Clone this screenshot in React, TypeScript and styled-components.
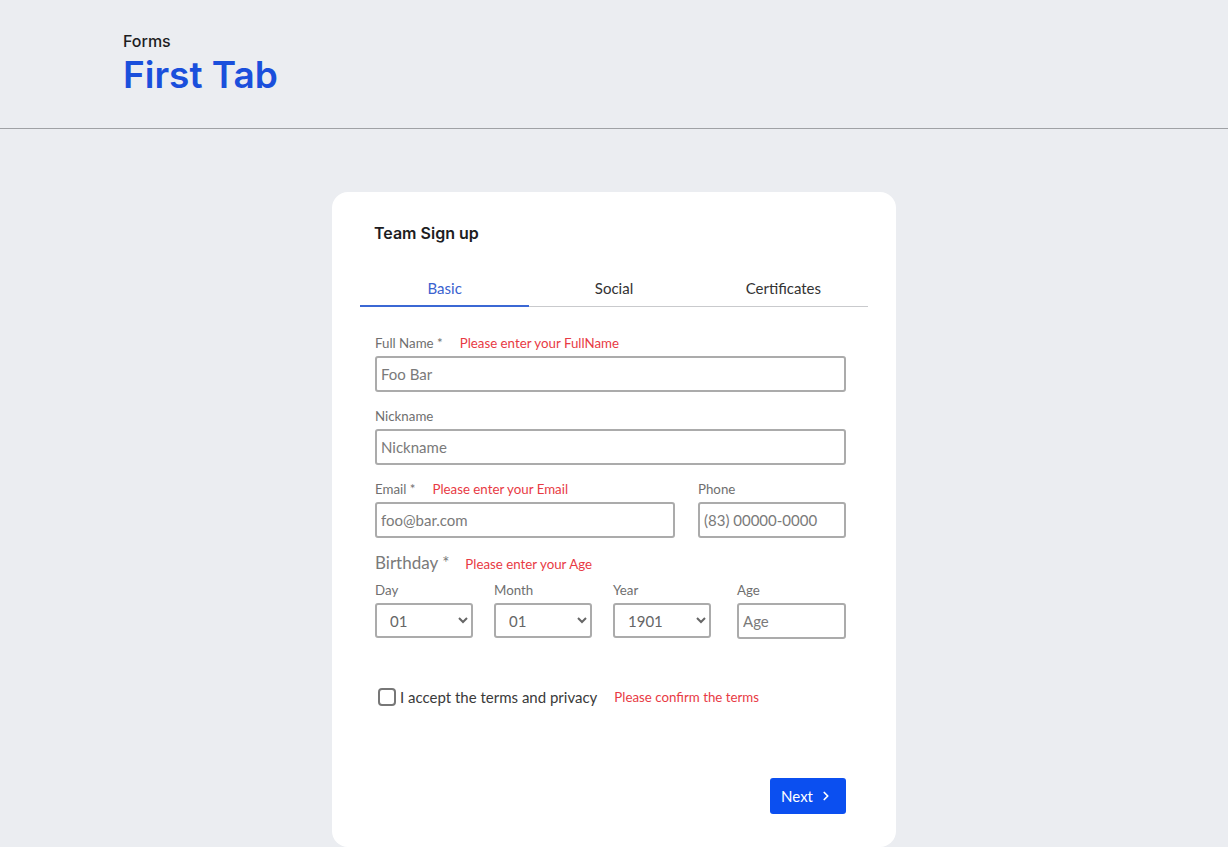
import styled, { createGlobalStyle } from "styled-components";

const GlobalStyle = createGlobalStyle`
  body {
    margin: 0;
    background: #ebedf1;
    font-family: "Lato", "Noto Sans", sans-serif;
  }
`;

const App = () => {
  return (
    <>
      <GlobalStyle />
      <Header>
        <Breadcrumb>Forms</Breadcrumb>
        <PageTitle>First Tab</PageTitle>
      </Header>

      <Main>
        <Card>
          <CardTitle>Team Sign up</CardTitle>

          <Tabs>
            <Tab $active>Basic</Tab>
            <Tab>Social</Tab>
            <Tab>Certificates</Tab>
          </Tabs>

          <Form>
            <Field>
              <LabelRow>
                <Label>Full Name *</Label>
                <Erro>Please enter your FullName</Erro>
              </LabelRow>
              <Input type="text" placeholder="Foo Bar" />
            </Field>

            <Field>
              <LabelRow>
                <Label>Nickname</Label>
              </LabelRow>
              <Input type="text" placeholder="Nickname" />
            </Field>

            <Linha>
              <Field $width="300px">
                <LabelRow>
                  <Label>Email *</Label>
                  <Erro>Please enter your Email</Erro>
                </LabelRow>
                <Input type="email" placeholder="foo@bar.com" />
              </Field>
              <Field $width="148px">
                <LabelRow>
                  <Label>Phone</Label>
                </LabelRow>
                <Input type="tel" placeholder="(83) 00000-0000" />
              </Field>
            </Linha>

            <BirthdayRow>
              <BirthdayLabel>Birthday *</BirthdayLabel>
              <Erro>Please enter your Age</Erro>
            </BirthdayRow>

            <DateGrid>
              <SmallField>
                <Label>Day</Label>
                <Select defaultValue="01">
                  <option>01</option>
                </Select>
              </SmallField>
              <SmallField>
                <Label>Month</Label>
                <Select defaultValue="01">
                  <option>01</option>
                </Select>
              </SmallField>
              <SmallField>
                <Label>Year</Label>
                <Select defaultValue="1901">
                  <option>1901</option>
                </Select>
              </SmallField>
              <SmallField $offset>
                <Label>Age</Label>
                <Input type="number" placeholder="Age" />
              </SmallField>
            </DateGrid>

            <TermsRow>
              <CheckLabel>
                <Checkbox type="checkbox" />
                I accept the terms and privacy
              </CheckLabel>
              <Erro>Please confirm the terms</Erro>
            </TermsRow>

            <Actions>
              <NextButton type="button">
                Next
                <svg width="14" height="14" viewBox="0 0 24 24" fill="none" stroke="currentColor" strokeWidth="3" strokeLinecap="round" strokeLinejoin="round">
                  <path d="M9 6l6 6-6 6" />
                </svg>
              </NextButton>
            </Actions>
          </Form>
        </Card>
      </Main>
    </>
  );
};

export default App;

const Header = styled.header`
  height: 129px;
  box-sizing: border-box;
  padding: 31px 0 0 123px;
  border-bottom: 1px solid #9fa1a5;
  font-family: "Inter", "Noto Sans", sans-serif;
`;

const Breadcrumb = styled.div`
  font-size: 16px;
  font-weight: 500;
  color: #1d1d1f;
  line-height: 20px;
`;

const PageTitle = styled.h1`
  margin: 2px 0 0;
  font-size: 37px;
  font-weight: 600;
  line-height: 44px;
  color: #1a4fdc;
`;

const Main = styled.main`
  display: flex;
  justify-content: center;
  padding-top: 63px;
`;

const Card = styled.section`
  width: 564px;
  height: 655px;
  box-sizing: border-box;
  background: #ffffff;
  border-radius: 16px;
  padding: 31px 28px 32px;
`;

const CardTitle = styled.h2`
  margin: 0;
  padding: 0 14px;
  font-family: "Inter", "Noto Sans", sans-serif;
  font-size: 16px;
  font-weight: 600;
  line-height: 20px;
  color: #1d1d1f;
`;

const Tabs = styled.div`
  display: grid;
  grid-template-columns: repeat(3, 1fr);
  margin-top: 28px;
  border-bottom: 1px solid #c9cacd;
`;

const Tab = styled.div<{ $active?: boolean }>`
  text-align: center;
  font-size: 15px;
  line-height: 20px;
  padding: 7px 0 7px;
  color: ${(p) => (p.$active ? "#3a62cf" : "#333")};
  border-bottom: 2px solid ${(p) => (p.$active ? "#3b68d4" : "transparent")};
  margin-bottom: -1px;
`;

const Form = styled.form`
  display: flex;
  flex-direction: column;
  padding: 28px 22px 0 15px;
`;

const Field = styled.div<{ $width?: string }>`
  display: flex;
  flex-direction: column;
  width: ${(p) => p.$width || "auto"};
  margin-bottom: 16px;
`;

const LabelRow = styled.div`
  display: flex;
  align-items: center;
  gap: 17px;
  height: 16px;
  margin-bottom: 5px;
`;

const Label = styled.label`
  font-size: 13.3px;
  line-height: 16px;
  color: #6f6f6f;
`;

const Erro = styled.span`
  font-size: 13.3px;
  line-height: 16px;
  color: #e83a44;
`;

const Input = styled.input`
  height: 36px;
  box-sizing: border-box;
  width: 100%;
  padding: 0 4px;
  border: 2px solid #ababab;
  border-radius: 3px;
  font-family: inherit;
  font-size: 15px;
  color: #444;
  outline: none;

  &::placeholder {
    color: #7a7a7a;
  }

  &::-webkit-inner-spin-button {
    display: none;
  }
`;

const Linha = styled.div`
  display: flex;
  justify-content: space-between;
`;

const BirthdayRow = styled.div`
  display: flex;
  align-items: baseline;
  gap: 16px;
  margin-top: -2px;
`;

const BirthdayLabel = styled.span`
  font-size: 17px;
  line-height: 22px;
  color: #7a7a7a;
`;

const DateGrid = styled.div`
  display: grid;
  grid-template-columns: 98px 98px 98px 1fr;
  column-gap: 21px;
  margin-top: 8px;
`;

const SmallField = styled.div<{ $offset?: boolean }>`
  display: flex;
  flex-direction: column;
  gap: 5px;
  margin-left: ${(p) => (p.$offset ? "5px" : "0")};
`;

const Select = styled.select`
  height: 35px;
  padding: 0 8px 0 9px;
  border: 2px solid #ababab;
  border-radius: 3px;
  background: #fff;
  font-family: inherit;
  font-size: 15px;
  color: #666;
  outline: none;
`;

const TermsRow = styled.div`
  display: flex;
  align-items: center;
  gap: 17px;
  margin-top: 49px;
  padding-left: 3px;
`;

const CheckLabel = styled.label`
  display: flex;
  align-items: center;
  gap: 4px;
  font-size: 15px;
  color: #3a3a3a;
`;

const Checkbox = styled.input`
  width: 18px;
  height: 18px;
  margin: 0;
  appearance: none;
  border: 2px solid #777;
  border-radius: 4px;
  box-sizing: border-box;
`;

const Actions = styled.div`
  display: flex;
  justify-content: flex-end;
  margin-top: 72px;
`;

const NextButton = styled.button`
  display: flex;
  align-items: center;
  gap: 6px;
  height: 36px;
  padding: 0 13px 0 11px;
  background: #0b4ff0;
  color: #fff;
  border: none;
  border-radius: 3px;
  font-family: inherit;
  font-size: 15px;
  cursor: pointer;
`;
